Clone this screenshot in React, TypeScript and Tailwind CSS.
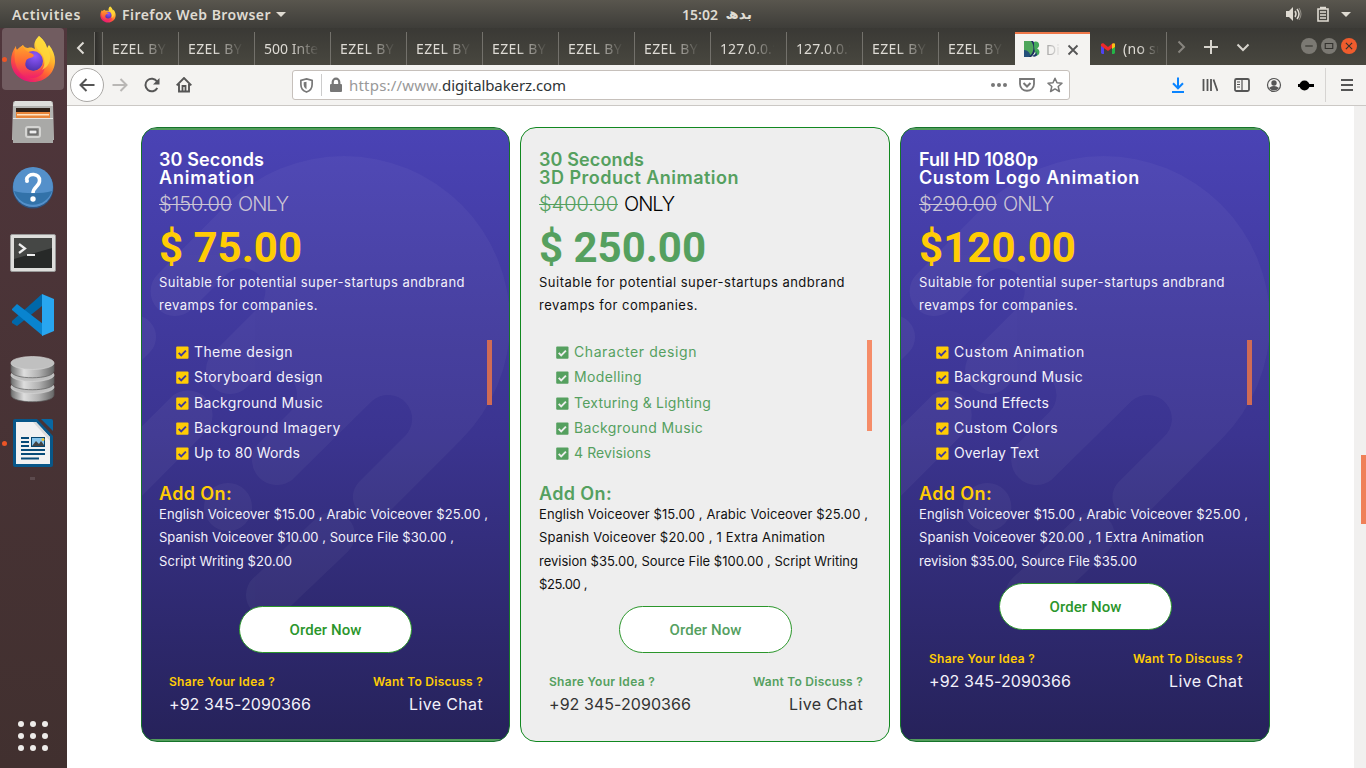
import { useLayoutEffect, useRef } from 'react';
import type { ReactNode } from 'react';

/* Text run whose tracking is adjusted so that it fills a given width. */
function Fit({ w, className = '', children }: { w: number; className?: string; children: string }) {
  const ref = useRef<HTMLSpanElement>(null);
  useLayoutEffect(() => {
    const el = ref.current;
    if (!el) return;
    el.style.letterSpacing = '0px';
    const natural = el.getBoundingClientRect().width;
    el.style.letterSpacing = `${(w - natural) / children.length}px`;
  }, [w, children]);
  return (
    <span ref={ref} className={`inline-block whitespace-pre ${className}`}>
      {children}
    </span>
  );
}

type Line = [string, number];

interface Plan {
  dark: boolean;
  title: Line[];
  old: Line;
  price: Line;
  features: Line[];
  addOns: Line[];
  thumb: string;
  addOnHeight: string;
}

const plans: Plan[] = [
  {
    dark: true,
    title: [['30 Seconds', 105], ['Animation', 96]],
    old: ['$150.00', 73],
    price: ['$ 75.00', 143],
    features: [['Theme design', 99], ['Storyboard design', 129], ['Background Music', 129], ['Background Imagery', 147], ['Up to 80 Words', 106]],
    addOns: [['English Voiceover $15.00 , Arabic Voiceover $25.00 ,', 329], ['Spanish Voiceover $10.00 , Source File $30.00 ,', 295], ['Script Writing $20.00', 133]],
    thumb: 'h-[65px]',
    addOnHeight: 'h-[103px]',
  },
  {
    dark: false,
    title: [['30 Seconds', 105], ['3D Product Animation', 200]],
    old: ['$400.00', 79],
    price: ['$ 250.00', 167],
    features: [['Character design', 123], ['Modelling', 68], ['Texturing & Lighting', 137], ['Background Music', 129], ['4 Revisions', 77]],
    addOns: [['English Voiceover $15.00 , Arabic Voiceover $25.00 ,', 329], ['Spanish Voiceover $20.00 , 1 Extra Animation', 286], ['revision $35.00, Source File $100.00 , Script Writing', 319], ['$25.00 ,', 48]],
    thumb: 'h-[91px]',
    addOnHeight: 'h-[103px]',
  },
  {
    dark: true,
    title: [['Full HD 1080p', 119], ['Custom Logo Animation', 221]],
    old: ['$290.00', 78],
    price: ['$120.00', 157],
    features: [['Custom Animation', 131], ['Background Music', 129], ['Sound Effects', 95], ['Custom Colors', 104], ['Overlay Text', 85]],
    addOns: [['English Voiceover $15.00 , Arabic Voiceover $25.00 ,', 329], ['Spanish Voiceover $20.00 , 1 Extra Animation', 285], ['revision $35.00, Source File $35.00', 218]],
    thumb: 'h-[65px]',
    addOnHeight: 'h-[80px]',
  },
];

function Backdrop() {
  return (
    <svg className="absolute inset-0 h-full w-full" viewBox="142 128 367 613" preserveAspectRatio="none" aria-hidden="true">
      <g fill="#fff" opacity=".04">
        <path d="M158 274L226.600 204.600A166 166 0 0 1 461.400 439.400L389 512A21 21 0 0 1 359 482L404 437A23 23 0 0 0 372 401L292 480A25 25 0 0 1 257 445L290 412A24 24 0 0 0 256 378L247 387A24 24 0 0 1 213 353L259 307A23 23 0 0 0 227 274L192 309A24 24 0 0 1 158 274Z" />
        <circle cx="228" cy="507" r="24" />
      </g>
      <g stroke="#fff" opacity=".04" strokeLinecap="round" fill="none">
        <path d="M188 415L100 503" strokeWidth="49" />
        <path d="M134 337L100 371" strokeWidth="44" />
        <path d="M332 535L269 595" strokeWidth="46" />
      </g>
    </svg>
  );
}

function Check({ dark }: { dark: boolean }) {
  return (
    <svg className="h-[13px] w-[13px] shrink-0" viewBox="0 0 13 13" aria-hidden="true">
      <rect x=".2" y=".5" width="12.3" height="12.2" rx="1" fill={dark ? '#ffcc05' : '#55a05f'} />
      <path d="M2.7 6.8l2.5 2.5 4.7-4.7" fill="none" stroke={dark ? '#40399a' : '#eee'} strokeWidth="1.9" />
    </svg>
  );
}

function Card({ plan, width }: { plan: Plan; width: string }) {
  const { dark } = plan;
  const body = dark ? 'text-[#f3f1fb]' : 'text-[#111]';
  const accent = dark ? 'text-[#ffcc05]' : 'text-[#55a05f]';
  return (
    <article
      className={`relative h-[615px] shrink-0 overflow-hidden rounded-[16px] border font-[Inter,sans-serif] ${width} ${
        dark ? 'border-[#16742b] bg-linear-to-b from-[#4a43b5] via-[#3b3490] to-[#26225a]' : 'border-[#118820] bg-[#eeeeee]'
      }`}
    >
      {dark && <Backdrop />}
      <div className={`relative ml-auto flex h-full flex-col ${dark ? 'border-y-2 border-[#529d5b] pt-[21px]' : 'pt-[23px]'}`}>
        <div className="ml-auto flex w-[350px] flex-col pr-[17px]">
          <h2 className={`flex flex-col items-start text-[18px] leading-[18px] font-semibold ${dark ? 'text-white' : 'text-[#55a05f]'}`}>
            {plan.title.map(([t, w]) => (
              <Fit key={t} w={w}>{t}</Fit>
            ))}
          </h2>
          <p className="mt-[3px] flex h-7 gap-[6px] text-[20px] leading-7 font-light">
            <Fit w={plan.old[1]} className={`line-through decoration-1 ${dark ? 'text-[#cbc5d5]' : 'text-[#55a05f]'}`}>{plan.old[0]}</Fit>
            <Fit w={50} className={dark ? 'text-[#cbc5d5]' : 'text-black'}>ONLY</Fit>
          </p>
          <p className={`h-[52px] font-[Roboto,sans-serif] text-[42px] leading-[60px] font-bold ${accent}`}>
            <Fit w={plan.price[1]}>{plan.price[0]}</Fit>
          </p>
          <p className={`flex h-[70px] flex-col items-start pt-[0.5px] text-[13px] leading-[23.4px] ${body}`}>
            <Fit w={306}>Suitable for potential super-startups andbrand</Fit>
            <Fit w={159}>revamps for companies.</Fit>
          </p>
          <div className="flex h-[126px] items-start justify-between pl-[17px]">
            <ul className={`text-[14px] ${dark ? 'text-[#f3f1fb]' : 'text-[#55a05f]'}`}>
              {plan.features.map(([t, w]) => (
                <li key={t} className="flex h-[25.25px] items-center gap-[5px]">
                  <Check dark={dark} />
                  <Fit w={w} className="pb-[2px] leading-[23px]">{t}</Fit>
                </li>
              ))}
            </ul>
            <div className={`w-[5px] ${plan.thumb} ${dark ? 'bg-[#cf6b55]' : 'bg-[#f58c68]'}`} />
          </div>
          <h3 className={`mt-[19px] h-[18px] text-[18px] leading-[18px] font-semibold ${accent}`}>
            <Fit w={73}>Add On:</Fit>
          </h3>
          <p className={`flex flex-col items-start text-[13px] leading-[23.4px] ${plan.addOnHeight} ${body}`}>
            {plan.addOns.map(([t, w]) => (
              <Fit key={t} w={w}>{t}</Fit>
            ))}
          </p>
          <div className="flex justify-center">
            <button
              className={`h-[47px] w-[173px] rounded-full border border-[#2b962b] bg-white pt-[2px] font-[Roboto,sans-serif] text-[15px] font-medium ${
                dark ? 'text-[#2b962b]' : 'text-[#55a05f]'
              }`}
            >
              <Fit w={72}>Order Now</Fit>
            </button>
          </div>
          <div className="mt-[18px] flex justify-between pr-[9px] pl-[10px]">
            <div className="flex flex-col items-start">
              <Fit w={106} className={`text-[12px] leading-[22px] font-semibold ${accent}`}>Share Your Idea ?</Fit>
              <Fit w={142} className={`text-[16px] leading-[22px] ${dark ? 'text-[#f3f1fb]' : 'text-[#333]'}`}>+92 345-2090366</Fit>
            </div>
            <div className="flex flex-col items-end">
              <Fit w={110} className={`text-[12px] leading-[22px] font-semibold ${accent}`}>Want To Discuss ?</Fit>
              <Fit w={74} className={`text-[16px] leading-[22px] ${dark ? 'text-[#f3f1fb]' : 'text-[#333]'}`}>Live Chat</Fit>
            </div>
          </div>
        </div>
      </div>
    </article>
  );
}

function Firefox({ className }: { className: string }) {
  return (
    <svg className={className} viewBox="0 0 46 48" aria-hidden="true">
      <defs>
        <linearGradient id="ffBody" x1=".8" y1=".1" x2=".3" y2="1">
          <stop offset="0" stopColor="#fff044" />
          <stop offset=".35" stopColor="#ffb02b" />
          <stop offset=".65" stopColor="#ff5a36" />
          <stop offset="1" stopColor="#e5107a" />
        </linearGradient>
        <radialGradient id="ffGlobe" cx=".6" cy=".25" r=".8">
          <stop offset="0" stopColor="#9059ff" />
          <stop offset="1" stopColor="#4a2fa8" />
        </radialGradient>
        <linearGradient id="ffFox" x1="0" y1="0" x2="0" y2="1">
          <stop offset="0" stopColor="#ffa52b" />
          <stop offset=".5" stopColor="#ff6a35" />
          <stop offset="1" stopColor="#f0206a" />
        </linearGradient>
      </defs>
      <path d="M29 1c5 4 7 8 8 12 1-1 1-2 2-3 4 5 6 10 6 16 0 12-10 21-22 21S1 38 1 26c0-6 2-11 5-15 0 2 0 3 1 4 3-3 5-4 6-5 1 2 3 3 5 3 3-1 5 0 7 1-2-6 1-10 4-13z" fill="url(#ffBody)" />
      <circle cx="23" cy="26" r="10" fill="url(#ffGlobe)" />
      <path d="M6 11c0 2 0 3 1 4 3-3 5-4 6-5 0 3 2 6 8 8 2 1 4 2 2 4-2 1-6 1-7 4-3 7 4 10 8 10 6 0 9-4 10-9 3 9-3 16-12 16C10 43 1 29 6 11z" fill="url(#ffFox)" />
      <path d="M29 1c-5 6-4 11 1 16 5 5 6 12 2 18 8-4 11-13 5-22-1-4-3-8-8-12z" fill="#ffd83a" opacity=".8" />
    </svg>
  );
}

function Dock() {
  return (
    <nav className="flex h-[740px] w-[67px] shrink-0 flex-col items-center bg-linear-to-b from-[#50363c] to-[#41302f] pr-[2px]">
      <div className="flex h-[62px] w-full items-center">
        <i className="h-[5px] w-[5px] shrink-0 translate-x-[2px] rounded-full bg-[#ec5526]" />
        <div className="ml-[-3px] flex h-[62px] w-[62px] shrink-0 items-center justify-center rounded-[4px] bg-[#715c60]">
          <Firefox className="h-[48px] w-[46px]" />
        </div>
      </div>
      <svg className="mt-[10px] h-[46px] w-[44px] shrink-0" viewBox="0 0 44 46">
        <path d="M2 3q0-2 3-2h34q3 0 3 2l1 37H1z" fill="#b4b4b2" />
        <path d="M4 1h36l2 5H2z" fill="#dededc" />
        <path d="M5 8h34v10H5z" fill="#30221a" />
        <path d="M5 12h34v6H5z" fill="#e8853a" /><path d="M6 14h32v1.500H6z" fill="#ffe4c4" />
        <path d="M2 18h40v25H2z" fill="#a9a9a7" /><path d="M2 18h40v1H2z" fill="#e7e7e5" />
        <rect x="15" y="27" width="14" height="10" rx="2" fill="#8e8e8c" stroke="#d4d4d2" strokeWidth="2" />
        <rect x="18" y="30" width="8" height="4" fill="#eee" stroke="#555" />
      </svg>
      <svg className="mt-[19px] h-[44px] w-[44px] shrink-0" viewBox="0 0 44 44">
        <circle cx="22" cy="23" r="20.5" fill="#2c5482" /><circle cx="22" cy="22" r="20" fill="#5490ca" />
        <path d="M3 26a20 20 0 0 0 38 0c-10 3-28 3-38 0z" fill="#3272a9" />
        <path d="M15.500 15c1-8 14-7 13 1 0 5-6.500 6-6.500 12" fill="none" stroke="#fff" strokeWidth="3.600" /><circle cx="16" cy="16" r="2" fill="#fff" /><circle cx="22" cy="34" r="2.700" fill="#fff" />
      </svg>
      <svg className="mt-[25px] h-[38px] w-[46px] shrink-0" viewBox="0 0 46 38">
        <rect x=".5" y=".5" width="45" height="37" rx="1.500" fill="#dededc" stroke="#999" />
        <rect x="4" y="4" width="38" height="30" fill="#272928" /><path d="M4 4h38v10L4 25z" fill="#454745" />
        <path d="M9 10l6 4.500-6 4.500M17 21h8" fill="none" stroke="#eee" strokeWidth="2.200" />
      </svg>
      <svg className="mt-[22px] h-[42px] w-[42px] shrink-0" viewBox="0 0 42 42">
        <path d="M0 27L30 0v12L5 32 0 29z" fill="#0068aa" />
        <path d="M0 15l5-5 26 20v12L0 16z" fill="#0984cf" />
        <path d="M30 0l12 5v32l-12 5z" fill="#28a6f0" />
      </svg>
      <svg className="mt-[20px] h-[48px] w-[45px] shrink-0" viewBox="0 0 45 48">
        <defs><linearGradient id="disk"><stop stopColor="#6f6f6f" /><stop offset=".3" stopColor="#dedede" /><stop offset=".65" stopColor="#b0b0b0" /><stop offset="1" stopColor="#666" /></linearGradient></defs>
        {[26, 14, 2].map((y) => (
          <g key={y}>
            <path d={`M1 ${y + 5}v8c0 9 43 9 43 0v-8z`} fill="url(#disk)" stroke="#5c5c5c" strokeWidth=".7" />
            <ellipse cx="22.500" cy={y + 5} rx="21.500" ry="6.500" fill="#c0c0c0" stroke="#d6d6d6" strokeWidth=".7" />
          </g>
        ))}
      </svg>
      <div className="mt-[15px] flex w-full items-center">
        <i className="h-[5px] w-[5px] shrink-0 translate-x-[2px] rounded-full bg-[#ec5526]" />
        <svg className="ml-[8px] h-[48px] w-[40px] shrink-0" viewBox="0 0 40 48">
          <path d="M2 0h22l16 17v29q0 2-2 2H2q-2 0-2-2V2q0-2 2-2z" fill="#085789" />
          <path d="M28 0h10q2 0 2 2v10z" fill="#0868a3" />
          <path d="M3 3h20l14 15v27H3z" fill="#f2f2f2" /><path d="M23 3l14 15v4L20 3z" fill="#dadada" />
          <path d="M8 19h8M8 23h8M8 27h8M8 31h24M8 35h24M8 39.500h18" stroke="#074b78" strokeWidth="2" />
          <rect x="18.500" y="18.500" width="13" height="9" fill="#88c5eb" stroke="#07466f" /><path d="M19 27l4-5 3 3 2-3 3 4v1z" fill="#444" /><circle cx="30" cy="20.500" r="1.500" fill="#e8c33a" />
        </svg>
      </div>
      <i className="mt-[10px] h-[3px] w-[5px] bg-[#5c4a4d]" />
      <div className="mt-auto mb-[17px] grid grid-cols-3 gap-[6px]">
        {Array.from({ length: 9 }, (_, i) => (
          <i key={i} className="h-[6px] w-[6px] rounded-full bg-[#eeecea]" />
        ))}
      </div>
    </nav>
  );
}

function Icon({ className, children, size = 16 }: { className?: string; children: ReactNode; size?: number }) {
  return (
    <svg className={`shrink-0 ${className ?? ''}`} width={size} height={size} viewBox="0 0 16 16" fill="none" stroke="currentColor" strokeWidth="1.8" aria-hidden="true">
      {children}
    </svg>
  );
}

const E: Line = ['EZEL BY', 54];
const L: Line = ['127.0.0.1', 60];
const tabs: Line[] = [E, E, ['500 Inter', 60], E, E, E, E, E, L, L, E, E];

function TabBar() {
  return (
    <div className="flex h-[37px] items-end bg-linear-to-b from-[#3a3935] to-[#48473f] text-[14px] text-[#dedbd5]">
      <div className="flex h-[33px] w-[28px] items-center justify-center border-r border-[#73716b]">
        <Icon className="mt-[-2px]"><path d="M10.500 2.500L5 8l5.500 5.500" strokeWidth="2" /></Icon>
      </div>
      <div className="h-[33px] w-[7px] bg-linear-to-r from-[#2e2d2a] to-[#41403b]" />
      {tabs.map(([t, w], i) => (
        <div key={i} className="h-[33px] w-[76px] shrink-0 overflow-hidden border-l border-[#73716b] pl-[9px]">
          <span className="block w-[54px] overflow-hidden leading-[33px] [mask-image:linear-gradient(to_right,black_48%,transparent_103%)]">
            <Fit w={w}>{t}</Fit>
          </span>
        </div>
      ))}
      <div className="ml-px flex h-[33px] w-[75px] shrink-0 items-center border-t-2 border-[#ee7749] bg-[#f4f3f1] pl-[9px]">
        <svg className="mt-[-2px] h-4 w-4 shrink-0" viewBox="0 0 16 16">
          <path d="M0 0h8c5 4 4 12-1 16H0z" fill="#4da65b" /><path d="M0 9c4 0 6 3 7 7H0z" fill="#24507a" /><path d="M7 0h2c4 5 3 12-2 16H5c5-4 6-11 2-16z" fill="#1d2a62" />
          <path d="M10 1c5-2 7 4 3 6.500 4 1.500 3 8-2 7.500 1-2 1-3 0-4-1-3-1-7-1-10z" fill="#43a95b" /><path d="M8 15c3-1 4-3 4-5l1 4c-1 2-3 2-5 1z" fill="#1f3a6a" />
        </svg>
        <span className="ml-[6px] w-[16px] overflow-hidden text-[#777] [mask-image:linear-gradient(to_right,#000a,transparent)]">Di</span>
        <Icon className="ml-[3px] text-[#555]"><path d="M3.500 3.500l9 9m0-9l-9 9" /></Icon>
      </div>
      <div className="flex h-[33px] w-[77px] shrink-0 items-center border-r border-[#73716b] pl-[11px]">
        <svg className="h-[11px] w-[14px] shrink-0" viewBox="0 0 14 11">
          <path d="M0 1h3v10H1L0 10z" fill="#4f43ee" /><path d="M11 1h3v9l-1 1h-2z" fill="#24b347" /><path d="M0 1l2-1 5 4 5-4v4L7 8 0 3z" fill="#ed2929" /><path d="M11 1l2-1 1 1v3l-3 2z" fill="#f9bf16" />
        </svg>
        <span className="ml-[8px] w-[36px] overflow-hidden [mask-image:linear-gradient(to_right,black_45%,transparent)]"><Fit w={42}>(no su</Fit></span>
      </div>
      <div className="flex h-[37px] items-center text-[#d7d4cd]">
        <Icon className="ml-[6px] text-[#88857f]"><path d="M5.500 2.500L11 8l-5.500 5.500" strokeWidth="2" /></Icon>
        <Icon className="ml-[14px]"><path d="M8 1v14M1 8h14" strokeWidth="2" /></Icon>
        <Icon className="ml-[16px]"><path d="M2.500 5.500L8 11l5.500-5.500" strokeWidth="2" /></Icon>
        <div className="ml-[50px] flex gap-[4px] pb-[2px] text-[#33322e]">
          <span className="flex h-4 w-4 items-center justify-center rounded-full bg-[#7b7973]"><Icon size={10}><path d="M2 8h12" /></Icon></span>
          <span className="flex h-4 w-4 items-center justify-center rounded-full bg-[#7b7973]"><Icon size={10}><path d="M2 4h12v8H2z" /></Icon></span>
          <span className="flex h-4 w-4 items-center justify-center rounded-full bg-[#ef5c2d]"><Icon size={10}><path d="M3 3l10 10m0-10L3 13" /></Icon></span>
        </div>
      </div>
    </div>
  );
}

function NavBar() {
  return (
    <div className="flex h-[41px] items-center border-b border-[#cbc8c5] bg-[#f4f3f1] text-[#555]">
      <span className="ml-[3px] flex h-[34px] w-[34px] shrink-0 items-center justify-center rounded-full border border-[#aaa8a5] bg-white">
        <Icon><path d="M15.500 8H1.500M7.500 2l-6 6 6 6" strokeWidth="2" /></Icon>
      </span>
      <Icon className="ml-[8px] text-[#b9b7b5]"><path d="M.5 8h14M8.500 2l6 6-6 6" strokeWidth="2" /></Icon>
      <Icon className="ml-[16px]"><path d="M13.300 11A6.300 6.300 0 1 1 13 4.500" strokeWidth="2" /><path d="M15.500 1v6.500H9z" fill="currentColor" stroke="none" /></Icon>
      <Icon className="ml-[16px]"><path d="M.7 8.300L8 1l7.300 7.300M3 7v7.500h10V7" strokeWidth="1.900" /><path d="M6.500 14V9h3v5" strokeWidth="1.800" /></Icon>
      <div className="ml-[100px] flex h-[30px] w-[778px] shrink-0 items-center rounded-[3px] border border-[#c6c0bb] bg-white text-[#777]">
        <Icon className="ml-[6px]" size={15}><path d="M8 1l6 1.500v4.500c0 4-3 7-6 8-3-1-6-4-6-8V2.500z" /><path d="M8 4v8c-2-1-3-3-3-5V4.500z" fill="currentColor" stroke="none" /></Icon>
        <i className="ml-[7px] h-[22px] w-px bg-[#ccc]" />
        <Icon className="ml-[6px]"><rect x="2" y="7" width="12" height="8" rx="1" fill="currentColor" stroke="none" /><path d="M4.700 8V5a3.300 3.300 0 0 1 6.600 0v3" strokeWidth="2.200" /></Icon>
        <span className="ml-[5px] text-[15px] text-[#999]"><Fit w={93}>https://www.</Fit><Fit w={124} className="text-[#2e3436]">digitalbakerz.com</Fit></span>
        <Icon className="ml-auto" size={16}><g fill="currentColor" stroke="none"><circle cx="2" cy="8" r="2" /><circle cx="8" cy="8" r="2" /><circle cx="14" cy="8" r="2" /></g></Icon>
        <Icon className="ml-[12px]"><path d="M1 2h14v5c0 9-14 9-14 0z" /><path d="M4.500 6L8 9.500 11.500 6" strokeWidth="2" /></Icon>
        <Icon className="mr-[6px] ml-[12px]"><path d="M8 1.200l2 4.600 5 .4-3.800 3.300 1.200 5L8 11.900l-4.400 2.600 1.200-5L1 6.200l5-.4z" strokeWidth="1.500" strokeLinejoin="round" /></Icon>
      </div>
      <Icon className="ml-[100px] text-[#0a84ff]"><path d="M8 .5v10.500M3 6.300l5 5 5-5M2 15h12" strokeWidth="2" /></Icon>
      <Icon className="ml-[16px]"><path d="M1.500 2v12M5.500 2v12M9 2v12M11.500 2.500l4 11.500" /></Icon>
      <Icon className="ml-[16px]"><rect x="1" y="2" width="14" height="12" rx="1.500" /><path d="M8 2v12M3 5h3M3 7.500h3M3 10h3" strokeWidth="1.200" /></Icon>
      <Icon className="ml-[16px]"><circle cx="8" cy="8" r="6.500" strokeWidth="1.200" /><circle cx="8" cy="6" r="2.700" fill="currentColor" stroke="none" /><path d="M3 11q5-4 10 0-5 5-10 0z" fill="currentColor" stroke="none" /></Icon>
      <Icon className="ml-[16px] text-black"><circle cx="6.500" cy="8.500" r="5" fill="currentColor" stroke="none" /><path d="M0 8.500h16" strokeWidth="3" /></Icon>
      <i className="ml-[11px] h-[34px] w-px shrink-0 bg-[#d6d4d2]" />
      <Icon className="ml-[13px]"><path d="M2 3h12M2 8h12M2 13h12" /></Icon>
    </div>
  );
}

export default function App() {
  return (
    <div className="h-[768px] w-[1366px] overflow-hidden bg-white font-['Noto_Sans',sans-serif]">
      <header className="grid h-7 grid-cols-3 items-center bg-linear-to-b from-[#59564e] to-[#3e3d39] text-[14px] font-semibold text-[#dfdbd2]">
        <div className="flex items-center pl-3">
          <Fit w={69}>Activities</Fit>
          <Firefox className="ml-[19px] h-[17px] w-[16px]" />
          <Fit w={149} className="ml-[6px]">Firefox Web Browser</Fit>
          <i className="ml-[5px] border-x-[5px] border-t-[5px] border-transparent border-t-[#dfdbd2]" />
        </div>
        <div className="flex justify-center gap-[6px] pl-[68px]">
          <Fit w={36}>15:02</Fit>
          <span dir="rtl" className="w-[28px] font-['DejaVu_Sans',sans-serif] text-[14px] leading-5 font-bold">بدھ</span>
        </div>
        <div className="flex items-center justify-end pr-[15px]">
          <Icon><path d="M0 5h3l4-4v14l-4-4H0z" fill="currentColor" stroke="none" /><path d="M9 5q2 3 0 6M11 3q4 5 0 10" strokeWidth="1.500" /><path d="M13 2q4 6 0 12" strokeWidth="1" opacity=".5" /></Icon>
          <Icon className="ml-[13px]"><path d="M3 3h10v12H3zM5 1.500h6M5 6h6M5 9h6M5 12h6" strokeWidth="1.600" /></Icon>
          <i className="ml-[10px] border-x-[5px] border-t-[5px] border-transparent border-t-[#dfdbd2]" />
        </div>
      </header>
      <div className="flex">
        <Dock />
        <div className="w-[1299px] shrink-0">
          <TabBar />
          <NavBar />
          <div className="flex h-[662px] justify-between">
            <main className="flex gap-[10px] pt-[21px] pl-[74px]">
              <Card plan={plans[0]} width="w-[369px]" />
              <Card plan={plans[1]} width="w-[370px]" />
              <Card plan={plans[2]} width="w-[370px]" />
            </main>
            <div className="flex w-3 shrink-0 justify-end bg-[#f1f0ef] pt-[349px]">
              <div className="h-[69px] w-[5px] bg-[#ef8058]" />
            </div>
          </div>
        </div>
      </div>
    </div>
  );
}
